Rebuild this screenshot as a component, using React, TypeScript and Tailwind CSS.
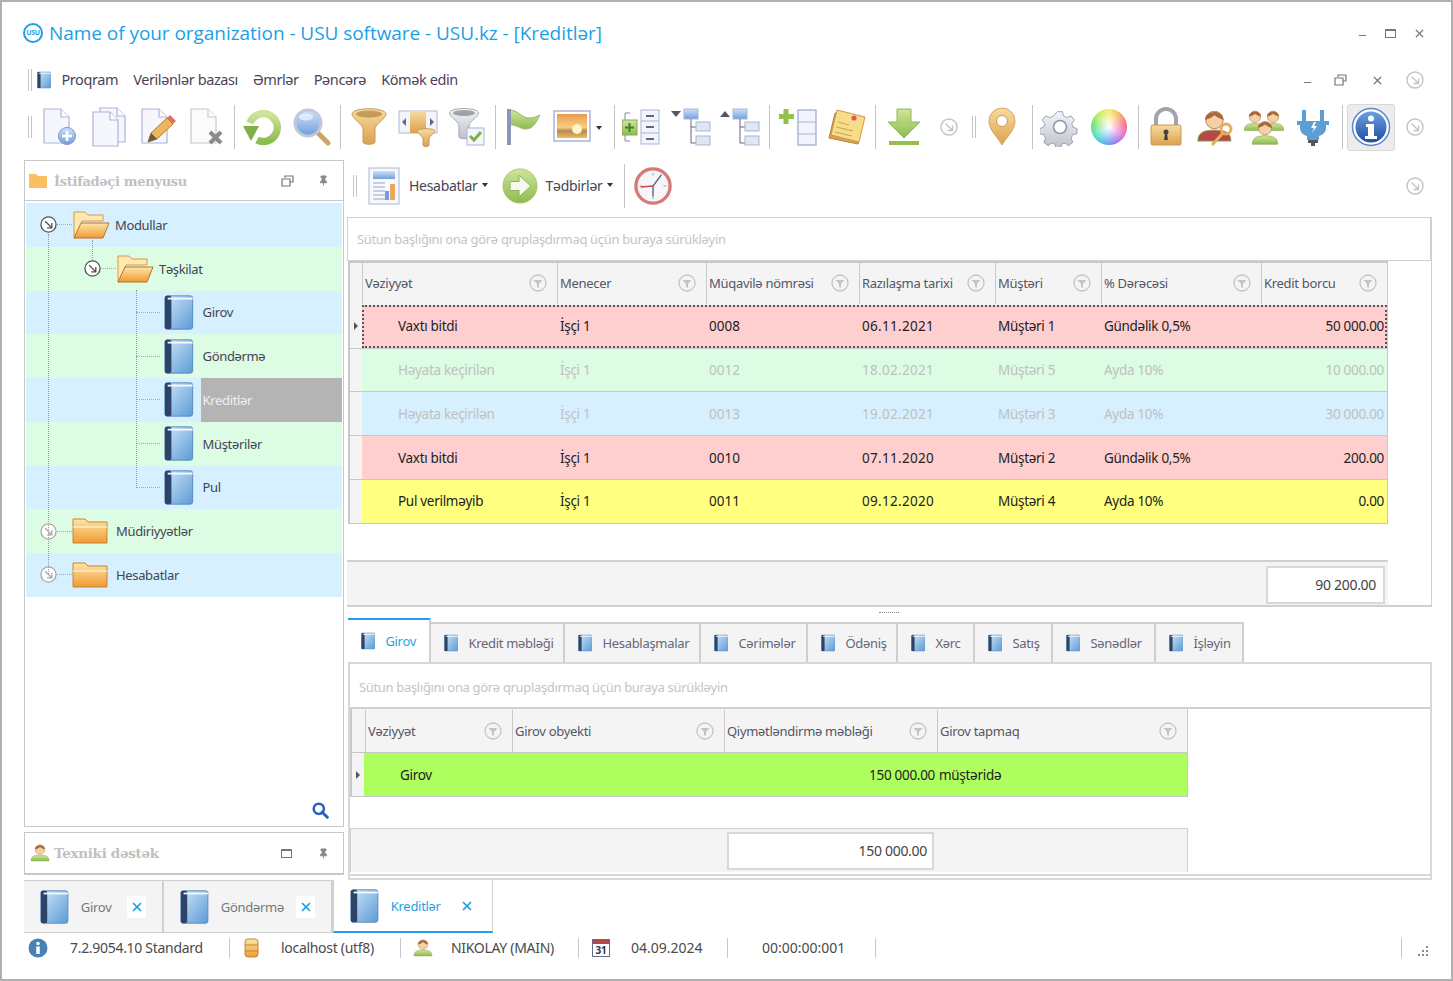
import { ReactNode } from "react";
import { X, Minus, Pin as PinIcon } from "lucide-react";

const Ic = ({ s = 40, children }: { s?: number; children: ReactNode }) => (
  <svg width={s} height={s} viewBox="0 0 40 40" className="shrink-0">
    {children}
  </svg>
);

const Defs = () => (
  <svg width="0" height="0" className="absolute">
    <defs>
      <linearGradient id="gBook" x1="0" y1="0" x2="1" y2="1">
        <stop offset="0" stopColor="#cfe6f8" />
        <stop offset="1" stopColor="#5c9bd6" />
      </linearGradient>
      <linearGradient id="gFolder" x1="0" y1="0" x2="0" y2="1">
        <stop offset="0" stopColor="#ffe6a8" />
        <stop offset="1" stopColor="#f09a32" />
      </linearGradient>
      <linearGradient id="gGold" x1="0" y1="0" x2="0" y2="1">
        <stop offset="0" stopColor="#f8dba0" />
        <stop offset="1" stopColor="#dca04e" />
      </linearGradient>
      <linearGradient id="gGreen" x1="0" y1="0" x2="0" y2="1">
        <stop offset="0" stopColor="#cfe59a" />
        <stop offset="1" stopColor="#8cbc4e" />
      </linearGradient>
      <linearGradient id="gBlue" x1="0" y1="0" x2="0" y2="1">
        <stop offset="0" stopColor="#cfe2f8" />
        <stop offset="1" stopColor="#6f9fdc" />
      </linearGradient>
      <linearGradient id="gGray" x1="0" y1="0" x2="0" y2="1">
        <stop offset="0" stopColor="#f2f4f8" />
        <stop offset="1" stopColor="#bcc2cc" />
      </linearGradient>
      <linearGradient id="gSun" x1="0" y1="0" x2="0" y2="1">
        <stop offset="0" stopColor="#e89a4e" />
        <stop offset="0.55" stopColor="#f8d080" />
        <stop offset="0.7" stopColor="#b88a50" />
        <stop offset="1" stopColor="#f0b860" />
      </linearGradient>
      <linearGradient id="gInfo" x1="0" y1="0" x2="0" y2="1">
        <stop offset="0" stopColor="#6c9ede" />
        <stop offset="1" stopColor="#1f4fa8" />
      </linearGradient>
    </defs>
  </svg>
);

const Book = ({ s = 40 }: { s?: number }) => (
  <svg width={s * 0.8} height={s} viewBox="0 0 32 40" className="shrink-0">
    <rect x="1" y="2" width="30" height="36" rx="2.5" fill="url(#gBook)" stroke="#5588c0" />
    <rect x="1" y="2" width="7" height="36" rx="2" fill="#2d4468" />
    <path d="M4 5h27" stroke="#f4f8fc" strokeWidth="2" />
  </svg>
);

const Doc = ({ x = 0, y = 0, fill = "#f5f7fd", line = "#a9b4d8" }: { x?: number; y?: number; fill?: string; line?: string }) => (
  <g transform={`translate(${x} ${y})`}>
    <path d="M0 0h17l8 8v26H0z" fill={fill} stroke={line} strokeWidth="1.2" />
    <path d="M17 0v8h8" fill="#fff" stroke={line} strokeWidth="1.2" />
  </g>
);

const NewDoc = () => (
  <Ic>
    <Doc x={5} y={2} />
    <circle cx="28" cy="29" r="8.5" fill="url(#gBlue)" stroke="#7a98c4" />
    <path d="M28 24v10M23 29h10" stroke="#fff" strokeWidth="2.6" />
  </Ic>
);
const CopyDoc = () => (
  <Ic>
    <Doc x={12} y={1} />
    <Doc x={5} y={5} />
  </Ic>
);
const EditDoc = () => (
  <Ic>
    <Doc x={5} y={2} />
    <path d="M11 35l3-9 16-15 6 6-16 15z" fill="#eeb65c" stroke="#b07c34" />
    <path d="M30 11l3-3 6 6-3 3z" fill="#e06f6a" />
    <path d="M11 35l3-9 6 6z" fill="#6a5a44" />
  </Ic>
);
const DelDoc = () => (
  <Ic>
    <Doc x={5} y={2} fill="#fbfbfb" line="#c8c8c8" />
    <path d="M24 25l11 11M35 25L24 36" stroke="#8a8a8a" strokeWidth="4" />
  </Ic>
);
const Refresh = () => (
  <Ic>
    <path d="M7 16a14 14 0 1 1 7 17" fill="none" stroke="url(#gGreen)" strokeWidth="7.500" />
    <path d="M0 19h16l-8 15z" fill="#7fb048" />
  </Ic>
);
const Search = () => (
  <Ic>
    <path d="M25 25l11 11" stroke="#cfa36a" strokeWidth="5" strokeLinecap="round" />
    <circle cx="16" cy="16" r="13" fill="url(#gBlue)" stroke="#c0c8dc" strokeWidth="3" />
    <ellipse cx="14" cy="10" rx="7" ry="3.5" fill="#ffffff" opacity="0.55" />
  </Ic>
);
const FunnelShape = ({ fill }: { fill: string }) => (
  <>
    <path d="M3 7c0-7 34-7 34 0 0 4-10 10-11 14v14c0 3-12 3-12 0V21C13 17 3 11 3 7z" fill={fill} stroke="#c49a5c" />
    <ellipse cx="20" cy="7" rx="13" ry="3.5" fill="#9c6d2e" opacity="0.55" />
  </>
);
const Funnel = () => (
  <Ic>
    <FunnelShape fill="url(#gGold)" />
  </Ic>
);
const ColFunnel = () => (
  <Ic>
    <rect x="1" y="4" width="38" height="22" fill="#f2f5fb" stroke="#b0b8d0" />
    <rect x="12" y="4" width="16" height="22" fill="url(#gGold)" />
    <path d="M8 11l-4 4 4 4zM32 11l4 4-4 4z" fill="#667" />
    <path d="M19 24c0-3 18-3 18 0 0 2-6 5-6 8v6c0 2-6 2-6 0v-6c0-3-6-6-6-8z" fill="url(#gGold)" stroke="#c49a5c" />
  </Ic>
);
const FunnelCheck = () => (
  <Ic>
    <g transform="scale(.85)">
      <path d="M3 7c0-7 34-7 34 0 0 4-10 10-11 14v14c0 3-12 3-12 0V21C13 17 3 11 3 7z" fill="url(#gGray)" stroke="#9a9ea6" />
      <ellipse cx="20" cy="7" rx="13" ry="3.5" fill="#666" opacity="0.55" />
    </g>
    <rect x="20" y="21" width="17" height="17" fill="#f4f6fb" stroke="#a9b4d8" />
    <path d="M23 29l4 4 7-8" fill="none" stroke="#7fb048" strokeWidth="3" />
  </Ic>
);
const Flag = () => (
  <Ic>
    <path d="M5 3c10 0 12 8 20 8 5 0 9-2 11-3-3 5-6 14-14 14-7 0-9-5-17-4z" fill="url(#gGreen)" stroke="#96b868" />
    <rect x="3" y="2" width="4" height="36" fill="#8c97b8" />
  </Ic>
);
const Picture = () => (
  <Ic>
    <rect x="1" y="4" width="36" height="30" fill="#fff" stroke="#aab4d4" strokeWidth="1.5" />
    <rect x="4" y="7" width="30" height="24" fill="url(#gSun)" />
    <circle cx="24" cy="22" r="5" fill="#fff3c8" />
  </Ic>
);
const GroupAdd = () => (
  <Ic>
    <path d="M8 6H3v28h5" fill="none" stroke="#7f8aa8" />
    <rect x="0" y="13" width="15" height="15" fill="url(#gGreen)" stroke="#88aa58" />
    <path d="M7.500 16v9M3 20.500h9" stroke="#3f7f2e" strokeWidth="2" />
    <rect x="19" y="3" width="18" height="34" fill="#f2f5fb" stroke="#a9b4d8" />
    <path d="M19 14h18M19 26h18" stroke="#a9b4d8" />
    <path d="M24 9h8M24 20h8M24 32h8" stroke="#667" strokeWidth="2" />
  </Ic>
);
const TreeIc = ({ up }: { up?: boolean }) => (
  <Ic>
    <path d={up ? "M0 10l5-6 5 6z" : "M0 4h10l-5 6z"} fill="#556" />
    <rect x="13" y="2" width="14" height="10" fill="url(#gBlue)" stroke="#a9b4d8" />
    <path d="M20 12v24h6M20 20h6" fill="none" stroke="#667" />
    <rect x="25" y="15" width="14" height="9" fill="#dfe6f4" stroke="#a9b4d8" />
    <rect x="25" y="29" width="14" height="9" fill="#dfe6f4" stroke="#a9b4d8" />
  </Ic>
);
const AddRow = () => (
  <Ic>
    <path d="M8 2v15M1 9.500h15" stroke="#93c04e" strokeWidth="5" />
    <rect x="20" y="3" width="18" height="35" fill="#f2f5fb" stroke="#a9b4d8" strokeWidth="1.4" />
    <path d="M20 15h18M20 27h18" stroke="#a9b4d8" />
  </Ic>
);
const Notes = () => (
  <Ic>
    <path d="M8 6l28 5-5 26-29-6z" fill="#dda24f" stroke="#b98338" />
    <path d="M10 3l28 7-6 25-28-7z" fill="#f9dc88" stroke="#c89a48" />
    <circle cx="27" cy="11" r="2.6" fill="#e2566a" />
    <path d="M11 15l11 3M9 20l17 4M8 25l17 4" stroke="#c4a35a" />
  </Ic>
);
const Download = () => (
  <Ic>
    <path d="M13 2h14v13h9L20 31 4 15h9z" fill="url(#gGreen)" stroke="#90b85c" />
    <rect x="5" y="34" width="30" height="4" fill="#93c04e" />
  </Ic>
);
const Circ = ({ s = 18, c = "#c4c4c4" }: { s?: number; c?: string }) => (
  <svg width={s} height={s} viewBox="0 0 18 18" className="shrink-0">
    <circle cx="9" cy="9" r="8" fill="#fff" stroke={c} strokeWidth="1.4" />
    <path d="M5.500 5.500l7 7M12.500 7.500v5h-5" fill="none" stroke={c} strokeWidth="1.4" />
  </svg>
);
const MapPin = () => (
  <Ic>
    <path d="M20 38C14 28 7 23 7 14a13 13 0 0 1 26 0c0 9-7 14-13 24z" fill="url(#gGold)" stroke="#d8a65c" />
    <circle cx="20" cy="14" r="5.500" fill="#fff" stroke="#c99a58" />
  </Ic>
);
const Gear = () => (
  <Ic>
    <path
      d="M17 2h6l1 5 4 2 5-2 4 5-3 4 1 4 5 2v6l-5 1-2 4 2 5-5 4-4-3-4 1-1 5h-6l-1-5-4-1-4 3-5-4 2-5-2-4-5-1v-6l5-2 1-4-3-4 4-5 5 2 4-2z"
      transform="translate(3 3) scale(.85)"
      fill="url(#gGray)"
      stroke="#8f96a6"
    />
    <circle cx="20" cy="20" r="6.500" fill="#fff" stroke="#8f96a6" strokeWidth="1.5" />
  </Ic>
);
const Wheel = () => (
  <div className="w-[36px] h-[36px] rounded-full bg-[conic-gradient(#f8ec70,#f8b060,#f86a8a,#e070d8,#9080f0,#50b8f0,#50e0c0,#70e070,#c0ec60,#f8ec70)]">
    <div className="w-full h-full rounded-full bg-[radial-gradient(circle,#ffffff_0%,#ffffff00_68%)]" />
  </div>
);
const Lock = () => (
  <Ic>
    <path d="M10 20V12a10 10 0 0 1 20 0v8" fill="none" stroke="#a0a4ae" strokeWidth="4" />
    <rect x="5" y="18" width="30" height="20" rx="1.5" fill="url(#gGold)" stroke="#c99a58" />
    <circle cx="20" cy="25" r="2.500" fill="#444" />
    <path d="M19 26h2l1 7h-4z" fill="#444" />
  </Ic>
);
const Person = ({ x = 0, y = 0, k = 1, body = "url(#gGreen)" }: { x?: number; y?: number; k?: number; body?: string }) => (
  <g transform={`translate(${x} ${y}) scale(${k})`}>
    <path d="M2 36c0-9 6-12 18-12s18 3 18 12z" fill={body} stroke="#8aa85a" />
    <circle cx="20" cy="13" r="9.500" fill="#f6cfa4" stroke="#b4804e" />
    <path d="M10 13c-1-10 19-13 20 0-5-1-8-4-10-5-2 2-6 4-10 5z" fill="#a8683a" />
  </g>
);
const UserKey = () => (
  <Ic>
    <Person x={1} y={1} k={0.92} body="#b84844" />
    <circle cx="31" cy="22" r="5" fill="none" stroke="#e0b060" strokeWidth="3" />
    <path d="M28 26L17 38" stroke="#e0b060" strokeWidth="3" />
  </Ic>
);
const Users = () => (
  <Ic>
    <Person x={-1} y={2} k={0.6} />
    <Person x={17} y={2} k={0.6} />
    <Person x={7} y={12} k={0.7} />
  </Ic>
);
const Plug = () => (
  <Ic>
    <path d="M9 3h4v11h14V3h4v11h5v4h-3v3c0 4-3 7-7 8v4H14v-4c-4-1-7-4-7-8v-3H4v-4h5z" fill="#5d9fd4" />
    <path d="M21 15l-3 6h3l-2 5 5-7h-3l2-4z" fill="#fff" />
    <path d="M15 33h10v3h-3v3h-4v-3h-3z" fill="#555" />
  </Ic>
);
const Info = ({ s = 40 }: { s?: number }) => (
  <Ic s={s}>
    <circle cx="20" cy="20" r="18.500" fill="#fff" stroke="#5b86c8" strokeWidth="1.500" />
    <circle cx="20" cy="20" r="15.500" fill="url(#gInfo)" />
    <circle cx="20" cy="11.500" r="3" fill="#fff" />
    <path d="M15 17h8v12h3v3H14v-3h3v-9h-2z" fill="#fff" />
  </Ic>
);
const FlatInfo = () => (
  <Ic s={20}>
    <circle cx="20" cy="20" r="19" fill="#4a80b8" />
    <circle cx="20" cy="11" r="3.500" fill="#fff" />
    <path d="M16.500 17h7v15h-7z" fill="#fff" />
  </Ic>
);
const Report = () => (
  <svg width="32" height="38" viewBox="0 0 32 38" className="shrink-0">
    <rect x="1" y="1" width="30" height="36" fill="#f7f9fd" stroke="#a9b4d8" />
    <rect x="5" y="4" width="22" height="8" fill="url(#gBlue)" />
    <path d="M5 16h12M5 20h12M5 24h12M5 28h12M5 32h12" stroke="#9aa6c4" />
    <rect x="17" y="24" width="4" height="9" fill="#6f9fdc" />
    <rect x="22" y="17" width="5" height="16" fill="#e8a860" />
  </svg>
);
const GoArrow = () => (
  <Ic s={36}>
    <circle cx="20" cy="20" r="19" fill="url(#gGreen)" stroke="#a4c46c" />
    <path d="M9 15h10V8l13 12-13 12v-7H9z" fill="#f4f8ee" stroke="#8cac5c" />
  </Ic>
);
const Clock = () => (
  <Ic s={38}>
    <circle cx="20" cy="20" r="18" fill="#f4f6fa" stroke="#d87878" strokeWidth="3.500" />
    <path d="M20 6v3M20 31v3M6 20h3M31 20h3" stroke="#b8bcc8" strokeWidth="1.500" />
    <path d="M20 20L7 21" stroke="#d04848" strokeWidth="1.500" />
    <path d="M20 20L29 8M20 20v11" stroke="#667" strokeWidth="1.500" />
  </Ic>
);
const FilterBtn = () => (
  <svg width="18" height="18" viewBox="0 0 18 18" className="shrink-0">
    <circle cx="9" cy="9" r="8" fill="#f4f4f4" stroke="#c4c4c4" strokeWidth="1.300" />
    <path d="M4.500 6h9L10 10v4l-2-1v-3z" fill="#c4c4c4" />
  </svg>
);
const FolderOpen = () => (
  <svg width="38" height="30" viewBox="0 0 38 30" className="shrink-0">
    <path d="M2 28V2h11l3 3h15v6H10L4 28z" fill="#ffe9b0" stroke="#d69a48" />
    <path d="M2 28l7-15h28l-6 15z" fill="url(#gFolder)" stroke="#b8722a" />
  </svg>
);
const FolderClosed = () => (
  <svg width="36" height="28" viewBox="0 0 36 28" className="shrink-0">
    <path d="M1 26V2h12l3 3h19v21z" fill="url(#gFolder)" stroke="#c48438" />
    <path d="M1 10h34" stroke="#ffecc0" strokeWidth="1.500" />
  </svg>
);
const SmallUser = () => (
  <Ic s={20}>
    <Person />
  </Ic>
);
const Db = () => (
  <svg width="15" height="20" viewBox="0 0 15 20" className="shrink-0">
    <rect x="1" y="1" width="13" height="18" rx="3" fill="url(#gFolder)" stroke="#c48438" />
    <path d="M1 7h13M1 13h13" stroke="#c48438" />
  </svg>
);
const Cal = () => (
  <div className="w-[18px] h-[18px] border border-[#6a6a8a] flex flex-col shrink-0">
    <div className="h-[4px] bg-[#b04848]" />
    <div className="text-[10px] leading-[12px] text-center font-bold text-[#334]">31</div>
  </div>
);
const UsuLogo = () => (
  <div className="w-[20px] h-[20px] rounded-full border-[2px] border-[#1a9fe8] flex items-center justify-center text-[7px] font-bold text-[#1a9fe8] shrink-0">
    USU
  </div>
);
const Restore = ({ c = "#777" }: { c?: string }) => (
  <svg width="13" height="12" viewBox="0 0 13 12">
    <path d="M4 3V1h8v6h-3M1 4h8v7H1z" fill="none" stroke={c} strokeWidth="1.200" />
  </svg>
);
const MaxBox = () => <div className="w-[11px] h-[9px] border border-[#777] border-t-2" />;
const ResizeGrip = () => (
  <svg width="15" height="13" viewBox="0 0 15 13" className="shrink-0">
    <path d="M11 1h2v2h-2zM7 5h2v2H7zM11 5h2v2h-2zM3 9h2v2H3zM7 9h2v2H7zM11 9h2v2h-2z" fill="#8a8a8a" />
  </svg>
);
const Grip = () => <div className="w-[4px] h-[22px] border-x border-[#c4c4c4] shrink-0" />;
const Sep = ({ cls }: { cls: string }) => <div className={`w-px h-[44px] bg-[#c4c4c4] shrink-0 ${cls}`} />;
const Cell = ({ children }: { children: ReactNode }) => (
  <div className="w-[40px] h-[40px] mr-[9px] flex items-center justify-center shrink-0">{children}</div>
);
const Caret = () => (
  <span className="inline-block ml-[4px] mb-[2px] border-x-[3px] border-x-transparent border-t-[4px] border-t-[#333]" />
);

const Toolbar = () => (
  <div className="h-[62px] flex items-center pl-[26px]">
    <Grip />
    <div className="w-[7px]" />
    <Cell><NewDoc /></Cell>
    <Cell><CopyDoc /></Cell>
    <Cell><EditDoc /></Cell>
    <Cell><DelDoc /></Cell>
    <Sep cls="-ml-px mr-[8px]" />
    <Cell><Refresh /></Cell>
    <Cell><Search /></Cell>
    <Sep cls="-ml-px mr-[8px]" />
    <Cell><Funnel /></Cell>
    <Cell><ColFunnel /></Cell>
    <Cell><FunnelCheck /></Cell>
    <Sep cls="-ml-px mr-[8px]" />
    <Cell><Flag /></Cell>
    <Cell><Picture /></Cell>
    <div className="-ml-[10px] mr-[12px]"><Caret /></div>
    <Sep cls="mr-[7px]" />
    <Cell><GroupAdd /></Cell>
    <Cell><TreeIc /></Cell>
    <Cell><TreeIc up /></Cell>
    <Sep cls="mr-[8px]" />
    <Cell><AddRow /></Cell>
    <Cell><Notes /></Cell>
    <Sep cls="-ml-px mr-[8px]" />
    <Cell><Download /></Cell>
    <div className="ml-[7px]"><Circ /></div>
    <div className="w-[14px]" />
    <Grip />
    <div className="w-[6px]" />
    <Cell><MapPin /></Cell>
    <Sep cls="ml-px mr-[7px]" />
    <Cell><Gear /></Cell>
    <Cell><Wheel /></Cell>
    <Sep cls="mr-[7px]" />
    <Cell><Lock /></Cell>
    <Cell><UserKey /></Cell>
    <Cell><Users /></Cell>
    <Cell><Plug /></Cell>
    <Sep cls="mr-[4px]" />
    <div className="w-[48px] h-[47px] rounded-[3px] bg-[#ececec] border border-[#d8d8d8] flex items-center justify-center shrink-0">
      <Info />
    </div>
    <div className="ml-[11px]"><Circ /></div>
  </div>
);

const tree = [
  { h: "Modullar", kind: "open", pad: "pl-[14px]", bg: "bg-[#d6f0ff]" },
  { h: "Təşkilat", kind: "open", pad: "pl-[58px]", bg: "bg-[#dcfce3]" },
  { h: "Girov", kind: "book", bg: "bg-[#d6f0ff]" },
  { h: "Göndərmə", kind: "book", bg: "bg-[#dcfce3]" },
  { h: "Kreditlər", kind: "book", bg: "bg-[#d6f0ff]", active: true },
  { h: "Müştərilər", kind: "book", bg: "bg-[#dcfce3]" },
  { h: "Pul", kind: "book", bg: "bg-[#d6f0ff]" },
  { h: "Müdiriyyətlər", kind: "closed", bg: "bg-[#dcfce3]" },
  { h: "Hesabatlar", kind: "closed", bg: "bg-[#d6f0ff]" },
];

const Dots = ({ w }: { w: string }) => <div className={`${w} border-t border-dotted border-[#aaa] shrink-0`} />;

const TreeRow = ({ r }: { r: (typeof tree)[number] }) => (
  <div className={`${r.bg} h-[43.75px] flex items-center text-[13px] tracking-[-0.35px]`}>
    {r.kind === "open" && (
      <div className={`${r.pad} flex items-center`}>
        <Circ s={17} c="#555" />
        <Dots w="w-[15px]" />
        <FolderOpen />
        <span className="ml-[5px] text-[#445]">{r.h}</span>
      </div>
    )}
    {r.kind === "closed" && (
      <div className="pl-[14px] flex items-center">
        <Circ s={17} c="#aaa" />
        <Dots w="w-[15px]" />
        <FolderClosed />
        <span className="ml-[8px] text-[#445]">{r.h}</span>
      </div>
    )}
    {r.kind === "book" && (
      <>
        <div className="ml-[110px]"><Dots w="w-[24px]" /></div>
        <div className="ml-[4px]"><Book s={37} /></div>
        <div
          className={`ml-[7px] flex-1 h-full flex items-center pl-[2px] ${r.active ? "bg-[#b4b4b4] text-[#f0f0f0]" : "text-[#445]"}`}
        >
          {r.h}
        </div>
      </>
    )}
  </div>
);

const LeftPanel = () => (
  <div className="w-[320px] flex flex-col shrink-0">
    <div className="h-[41px] border border-[#c8c8c8] flex items-center pl-[4px] pr-[14px]">
      <svg width="18" height="14" viewBox="0 0 18 14" className="shrink-0">
        <path d="M0 14V0h7l2 2h9v12z" fill="#f8c060" />
      </svg>
      <span className="ml-[7px] mt-[2px] font-[family-name:'DejaVu_Serif',serif] font-bold text-[13px] text-[#c0c0c0]">İstifadəçi menyusu</span>
      <div className="ml-auto"><Restore /></div>
      <PinIcon size={11} className="ml-[24px] text-[#888] fill-[#888]" />
    </div>
    <div className="h-[626px] border border-[#c8c8c8] border-t-0 relative pl-px pt-[2px] pr-px">
      {tree.map((r) => (
        <TreeRow key={r.h} r={r} />
      ))}
      <div className="absolute left-[23px] top-[33px] h-[340px] border-l border-dotted border-[#999]" />
      <div className="absolute left-[67px] top-[39px] h-[20px] border-l border-dotted border-[#999]" />
      <div className="absolute left-[111px] top-[89px] h-[198px] border-l border-dotted border-[#999]" />
      <svg width="17" height="17" viewBox="0 0 20 20" className="absolute right-[14px] bottom-[7px]">
        <circle cx="8" cy="8" r="6" fill="none" stroke="#2a62b8" strokeWidth="3" />
        <path d="M12 12l6 6" stroke="#2a62b8" strokeWidth="3.500" strokeLinecap="round" />
      </svg>
    </div>
    <div className="h-[43px] mt-[5px] border border-[#c8c8c8] border-b-2 flex items-center pl-[5px] pr-[14px]">
      <SmallUser />
      <span className="ml-[4px] font-[family-name:'DejaVu_Serif',serif] font-bold text-[13.5px] text-[#c0c0c0]">Texniki dəstək</span>
      <div className="ml-auto"><MaxBox /></div>
      <PinIcon size={11} className="ml-[26px] text-[#888] fill-[#888]" />
    </div>
  </div>
);

const topCols = ["w-[195px]", "w-[149px]", "w-[153px]", "w-[136px]", "w-[106px]", "w-[160px]", "w-[126px]"];
const topHead = ["Vəziyyət", "Menecer", "Müqavilə nömrəsi", "Razılaşma tarixi", "Müştəri", "% Dərəcəsi", "Kredit borcu"];
const topRows = [
  { bg: "bg-[#ffcfcf]", cells: ["Vaxtı bitdi", "İşçi 1", "0008", "06.11.2021", "Müştəri 1", "Gündəlik 0,5%", "50 000.00"], sel: true },
  { bg: "bg-[#dcfce3]", cells: ["Həyata keçirilən", "İşçi 1", "0012", "18.02.2021", "Müştəri 5", "Ayda 10%", "10 000.00"], dim: true },
  { bg: "bg-[#d6f0ff]", cells: ["Həyata keçirilən", "İşçi 1", "0013", "19.02.2021", "Müştəri 3", "Ayda 10%", "30 000.00"], dim: true },
  { bg: "bg-[#ffcfcf]", cells: ["Vaxtı bitdi", "İşçi 1", "0010", "07.11.2020", "Müştəri 2", "Gündəlik 0,5%", "200.00"] },
  { bg: "bg-[#ffff80]", cells: ["Pul verilməyib", "İşçi 1", "0011", "09.12.2020", "Müştəri 4", "Ayda 10%", "0.00"] },
];

const HeadCell = ({ w, label }: { w: string; label: string }) => (
  <div className={`${w} h-full border-l border-[#c8c8c8] flex items-center pl-[2px] pr-[10px] shrink-0 text-[#556] text-[13px] tracking-[-0.3px]`}>
    <span className="whitespace-nowrap">{label}</span>
    <div className="ml-auto"><FilterBtn /></div>
  </div>
);

const GroupBar = ({ cls }: { cls: string }) => (
  <div className={`${cls} flex items-center text-[#c4c4c4] whitespace-nowrap text-[13px] tracking-[-0.33px]`}>
    Sütun başlığını ona görə qruplaşdırmaq üçün buraya sürükləyin
  </div>
);

const TopGrid = () => (
  <div className="h-[391px] border-r border-b-2 border-[#d0d0d0] flex flex-col">
    <GroupBar cls="h-[44px] border border-[#d0d0d0] pl-[9px]" />
    <div className="w-[1040px] ml-px border-2 border-b-0 border-r border-[#c8c8c8] h-[44px] flex bg-[#f4f4f4] pb-[1px]">
      <div className="w-[12px] shrink-0" />
      {topHead.map((h, i) => (
        <HeadCell key={h} w={topCols[i]} label={h} />
      ))}
    </div>
    {topRows.map((r) => (
      <div key={r.cells[2]} className="w-[1040px] ml-px border-l-2 border-r border-b border-[#c8c8c8] h-[43.75px] flex">
        <div className="w-[12px] shrink-0 bg-[#f4f4f4] flex items-center justify-center">
          {r.sel && <span className="border-y-[4px] border-y-transparent border-l-[4px] border-l-[#555]" />}
        </div>
        <div className={`${r.bg} flex-1 flex items-center text-[13.5px] ${r.sel ? "outline-2 outline-dotted outline-[#555] -outline-offset-2" : ""} ${r.dim ? "text-[#c0c0c0]" : "text-[#222]"}`}>
          {r.cells.map((c, i) => (
            <div
              key={i}
              className={`${topCols[i]} shrink-0 whitespace-nowrap ${i === 0 ? "pl-[36px]" : i === 6 ? "text-right pr-[3px]" : "pl-[3px]"} ${i === 3 ? "tracking-[0.3px]" : ""} ${i === 2 ? "tracking-[0px]" : ""}`}
            >
              {c}
            </div>
          ))}
        </div>
      </div>
    ))}
    <div className="mt-auto w-[1041px] h-[45px] bg-[#f4f4f4] border-t-2 border-[#d0d0d0] flex justify-end items-center pr-[3px] pt-[3px]">
      <div className="w-[119px] h-[38px] bg-white border-2 border-[#d8d8d8] flex items-center justify-end pr-[7px] text-[#444]">90 200.00</div>
    </div>
  </div>
);

const tabs = [
  { t: "Girov", w: "w-[83px]", active: true },
  { t: "Kredit məbləği", w: "w-[134px]" },
  { t: "Hesablaşmalar", w: "w-[136px]" },
  { t: "Cərimələr", w: "w-[107px]" },
  { t: "Ödəniş", w: "w-[90px]" },
  { t: "Xərc", w: "w-[77px]" },
  { t: "Satış", w: "w-[78px]" },
  { t: "Sənədlər", w: "w-[103px]" },
  { t: "İşləyin", w: "w-[88px]" },
];

const botCols = ["w-[147px]", "w-[212px]", "w-[213px]", "w-[250px]"];
const botHead = ["Vəziyyət", "Girov obyekti", "Qiymətləndirmə məbləği", "Girov tapmaq"];

const BottomGrid = () => (
  <div className="h-[218px] ml-px border-2 border-[#d8d8d8] flex flex-col">
    <GroupBar cls="h-[45px] pl-[9px] pt-[3px] border-b-2 border-[#d0d0d0]" />
    <div className="w-[838px] border-l-2 border-r border-[#c8c8c8] h-[43px] flex bg-[#f4f4f4] pt-[1px]">
      <div className="w-[13px] shrink-0" />
      {botHead.map((h, i) => (
        <HeadCell key={h} w={botCols[i]} label={h} />
      ))}
    </div>
    <div className="w-[838px] border-l-2 border-r border-y border-[#c8c8c8] h-[45px] flex">
      <div className="w-[12px] shrink-0 bg-[#f4f4f4] flex items-center justify-center">
        <span className="border-y-[4px] border-y-transparent border-l-[4px] border-l-[#555]" />
      </div>
      <div className="flex-1 bg-[#aeff5e] flex items-center text-[#222] text-[13.5px]">
        <div className="w-[147px] pl-[36px]">Girov</div>
        <div className="w-[212px]" />
        <div className="w-[214px] text-right pr-[2px]">150 000.00</div>
        <div className="pl-[2px]">müştəridə</div>
      </div>
    </div>
    <div className="mt-auto w-[838px] h-[44px] border border-b-0 border-[#d0d0d0] bg-[#f4f4f4] flex items-center pl-[376px] pt-[1px]">
      <div className="w-[207px] h-[38px] bg-white border-2 border-[#d8d8d8] flex items-center justify-end pr-[5px] text-[#444]">150 000.00</div>
    </div>
    <div className="h-[2px] mt-[2px] mb-[2px] bg-[#d8d8d8]" />
  </div>
);

const RightPanel = () => (
  <div className="w-[1085px] ml-[3px] flex flex-col shrink-0">
    <div className="h-[57px] flex items-center pl-[6px] pr-[8px] pb-[5px]">
      <Grip />
      <div className="ml-[11px]"><Report /></div>
      <span className="ml-[9px] text-[#445]">Hesabatlar</span>
      <Caret />
      <div className="ml-[14px]"><GoArrow /></div>
      <span className="ml-[8px] text-[#445]">Tədbirlər</span>
      <Caret />
      <div className="w-px h-[44px] bg-[#c4c4c4] ml-[11px]" />
      <div className="ml-[9px]"><Clock /></div>
      <div className="ml-auto"><Circ /></div>
    </div>
    <TopGrid />
    <div className="h-[11px] flex items-center justify-center">
      <div className="w-[20px] border-t border-dotted border-[#888] ml-[-1px]" />
    </div>
    <div className="h-[44px] flex items-end ml-px">
      {tabs.map((t) => (
        <div
          key={t.t}
          className={`${t.w} shrink-0 flex items-center pl-[13px] gap-[10px] whitespace-nowrap text-[13px] tracking-[-0.3px] border-[#cfcfcf] ${t.active ? "h-[44px] bg-white border-t-2 border-t-[#1ea0ee] border-r-2 text-[#2a9fe4]" : "h-[40px] bg-[#f4f4f4] border-t-2 border-r-2 text-[#667]"}`}
        >
          <Book s={18} />
          {t.t}
        </div>
      ))}
    </div>
    <BottomGrid />
  </div>
);

const docTabs = [
  { t: "Girov", w: "w-[140px]" },
  { t: "Göndərmə", w: "w-[169px]" },
  { t: "Kreditlər", w: "w-[160px]", active: true },
];

const StatusSep = () => <div className="w-px h-[20px] bg-[#c8c8c8] shrink-0" />;

export default function App() {
  return (
    <div className="w-[1453px] h-[981px] bg-white border-2 border-[#b0b0b0] overflow-hidden flex flex-col text-[14px] leading-[18px] tracking-[-0.3px] font-[family-name:'Noto_Sans','DejaVu_Sans',sans-serif]">
      <Defs />
      <div className="h-[62px] shrink-0 flex items-center pl-[21px] pr-[25px]">
        <UsuLogo />
        <span className="ml-[6px] text-[19px] tracking-[-0.05px] leading-[24px] text-[#1a9fe8] font-[family-name:'Open_Sans',sans-serif]">
          Name of your organization - USU software - USU.kz - [Kreditlər]
        </span>
        <div className="ml-auto flex items-center gap-[17px] text-[#777]">
          <Minus size={11} strokeWidth={2.5} className="mt-[4px]" />
          <MaxBox />
          <X size={13} strokeWidth={2.2} />
        </div>
      </div>
      <div className="h-[32px] shrink-0 flex items-center pl-[26px] pr-[27px] text-[#4a4458]">
        <Grip />
        <div className="ml-[5px]"><Book s={18} /></div>
        <div className="ml-[10px] flex gap-[15px] text-[14.5px] tracking-[-0.4px] pb-[2px]">
          <span>Proqram</span>
          <span>Verilənlər bazası</span>
          <span>Əmrlər</span>
          <span>Pəncərə</span>
          <span>Kömək edin</span>
        </div>
        <div className="ml-auto flex items-center text-[#777]">
          <Minus size={11} strokeWidth={2.5} className="mt-[4px]" />
          <div className="ml-[21px]"><Restore /></div>
          <X size={13} strokeWidth={2.2} className="ml-[24px]" />
          <div className="ml-[22px]"><Circ /></div>
        </div>
      </div>
      <Toolbar />
      <div className="h-[720px] shrink-0 flex mt-[2px] pl-[22px]">
        <LeftPanel />
        <RightPanel />
      </div>
      <div className="h-[53px] shrink-0 flex pl-[22px]">
        {docTabs.map((t) => (
          <div
            key={t.t}
            className={`${t.w} shrink-0 flex items-center pl-[16px] text-[13px] ${t.active ? "bg-white border-x border-b-2 border-x-[#d0d0d0] border-b-[#1ea0ee] text-[#2a9fe4]" : "bg-[#f4f4f4] border-r-2 border-y border-[#d0d0d0] text-[#777]"}`}
          >
            <Book s={36} />
            <span className="ml-[12px]">{t.t}</span>
            <div className="ml-auto mr-[16px] w-[19px] h-[22px] bg-white flex items-center justify-center">
              <X size={14} strokeWidth={3} className="text-[#1f9ee8]" />
            </div>
          </div>
        ))}
      </div>
      <div className="h-[28px] mt-[1px] shrink-0 flex items-center pl-[26px] pr-[21px] text-[#4a4a4a]">
        <FlatInfo />
        <span className="ml-[22px] w-[159px]">7.2.9054.10 Standard</span>
        <StatusSep />
        <div className="ml-[14px]"><Db /></div>
        <span className="ml-[22px] w-[119px]">localhost (utf8)</span>
        <StatusSep />
        <div className="ml-[12px]"><SmallUser /></div>
        <span className="ml-[18px] w-[127px]">NIKOLAY (MAIN)</span>
        <StatusSep />
        <div className="ml-[13px]"><Cal /></div>
        <span className="ml-[21px] w-[96px] tracking-[0px]">04.09.2024</span>
        <StatusSep />
        <span className="ml-[34px] w-[113px] tracking-[0px]">00:00:00:001</span>
        <StatusSep />
        <div className="ml-auto"><StatusSep /></div>
        <div className="ml-[13px] mt-[6px]"><ResizeGrip /></div>
      </div>
    </div>
  );
}
